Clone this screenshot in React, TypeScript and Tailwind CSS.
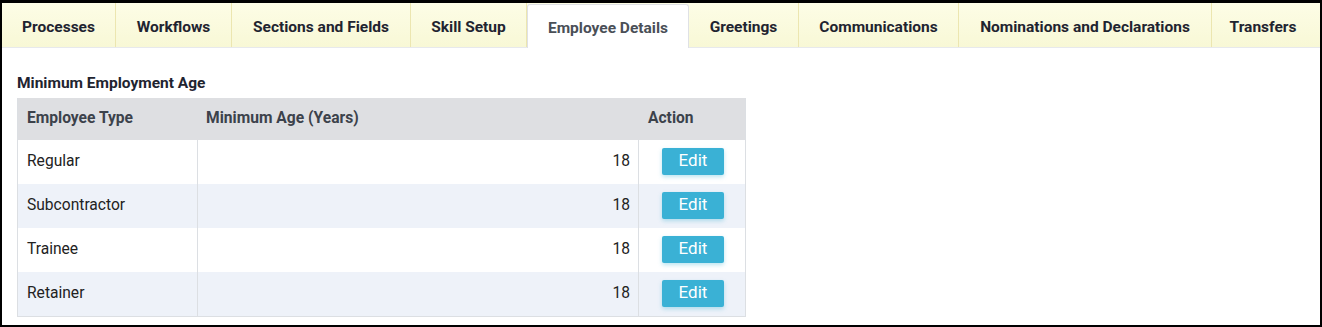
import { Fragment } from "react"

const tabs = [
  { label: "Processes", w: "w-[114px]" },
  { label: "Workflows", w: "w-[116px]" },
  { label: "Sections and Fields", w: "w-[179px]" },
  { label: "Skill Setup", w: "w-[116px]" },
  { label: "Employee Details", w: "w-[162px]" },
  { label: "Greetings", w: "w-[110px]" },
  { label: "Communications", w: "w-[160px]" },
  { label: "Nominations and Declarations", w: "w-[253px]" },
  { label: "Transfers", w: "flex-1" },
]

const rows = [
  { type: "Regular", age: 18 },
  { type: "Subcontractor", age: 18 },
  { type: "Trainee", age: 18 },
  { type: "Retainer", age: 18 },
]

export default function App() {
  return (
    <div
      className="w-[1322px] h-[327px] border-2 border-t-[3px] border-black bg-white overflow-hidden"
      style={{ fontFamily: "Roboto, 'Liberation Sans', sans-serif" }}
    >
      {/* Tabs */}
      <div className="flex h-[45px] bg-gradient-to-b from-[#fdfde6] to-[#f8f8d6] border-b border-[#e7e9ec]">
        {tabs.map((tab) => {
          const active = tab.label === "Employee Details"
          return (
            <div
              key={tab.label}
              className={
                tab.w +
                (active
                  ? " flex items-center justify-center shrink-0 whitespace-nowrap pt-[4px] bg-white border border-b-0 border-[#dfe1e5] rounded-t-[3px] mt-[1px] text-[15.5px] font-bold text-[#4a4f57] -mb-px"
                  : " flex items-center justify-center shrink-0 whitespace-nowrap pt-[5px] border-r border-[#ece6b0] text-[15.5px] font-bold text-[#1f2430] last:pr-[6px] last:border-r-0")
              }
            >
              {tab.label}
            </div>
          )
        })}
      </div>

      {/* Content */}
      <div className="px-[15px] pt-[25px]">
        <h3 className="text-[15.5px] font-bold text-[#1f2430] leading-[20px] mb-[5px]">
          Minimum Employment Age
        </h3>
        <div className="w-[729px] border border-[#dcdfe3] border-t-0">
          <div className="grid grid-cols-[180px_441px_1fr] h-[42px] bg-[#dedfe2] items-center text-[15.6px] font-bold text-[#3c424b]">
            <div className="pl-[9px]">Employee Type</div>
            <div className="pl-[8px]">Minimum Age (Years)</div>
            <div className="pl-[9px]">Action</div>
          </div>
          {rows.map((row, i) => (
            <div
              key={row.type}
              className={
                "grid grid-cols-[180px_441px_1fr] h-[44px] items-center text-[15.6px] text-[#222] " +
                (i % 2 === 1 ? "bg-[#eef2f9]" : "bg-white")
              }
            >
              <Fragment>
                <div className="pl-[9px] pb-[1px] h-full flex items-center border-r border-[#dcdfe3]">
                  {row.type}
                </div>
                <div className="pr-[8px] pb-[1px] h-full flex items-center justify-end border-r border-[#dcdfe3]">
                  {row.age}
                </div>
                <div className="h-full flex items-center pl-[23px] pb-[2px]">
                  <button className="w-[62px] h-[27px] bg-[#3ab1d5] text-white text-[17px] rounded-[2px] shadow-[0_2px_4px_rgba(58,177,213,0.35)]">
                    Edit
                  </button>
                </div>
              </Fragment>
            </div>
          ))}
        </div>
      </div>
    </div>
  )
}
